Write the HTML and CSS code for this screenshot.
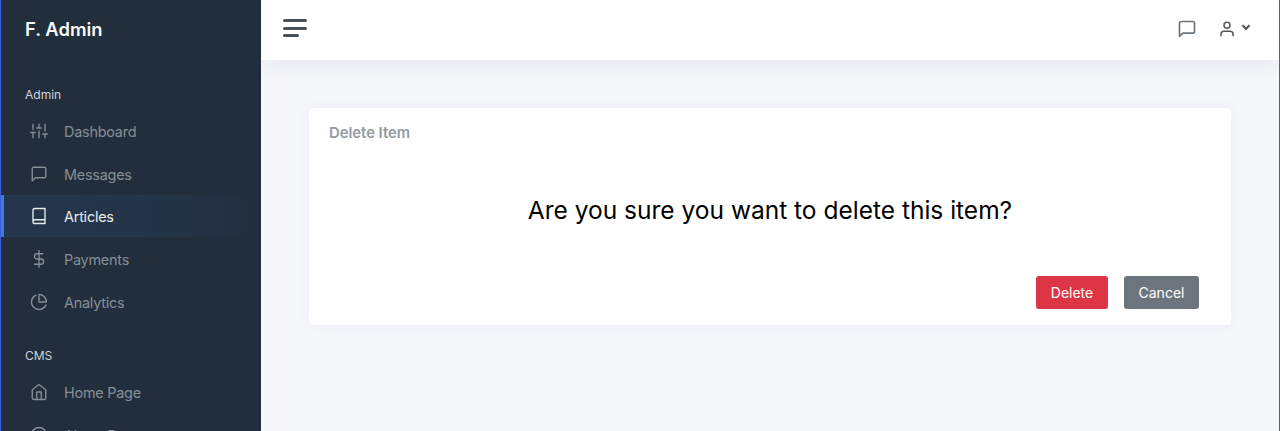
FILE: index.html
```html
<!DOCTYPE html>
<html lang="en">
<head>
<meta charset="utf-8">
<title>F. Admin</title>
<link rel="stylesheet" href="styles.css">
</head>
<body>
<div class="app">
  <nav class="sidebar">
    <div class="brand">F. Admin</div>
    <div class="section">Admin</div>
    <a class="link"><svg class="icon" viewBox="0 0 24 24"><path d="M4 21v-7M4 10V3M12 21v-9M12 8V3M20 21v-5M20 12V3M1 14h6M9 8h6M17 16h6"/></svg>Dashboard</a>
    <a class="link"><svg class="icon" viewBox="0 0 24 24"><path d="M21 15a2 2 0 0 1-2 2H7l-4 4V5a2 2 0 0 1 2-2h14a2 2 0 0 1 2 2z"/></svg>Messages</a>
    <a class="link active"><svg class="icon" viewBox="0 0 24 24"><path d="M4 19.5A2.5 2.5 0 0 1 6.500 17H20M6.500 2H20v20H6.500A2.500 2.500 0 0 1 4 19.500v-15A2.500 2.500 0 0 1 6.500 2z"/></svg>Articles</a>
    <a class="link"><svg class="icon" viewBox="0 0 24 24"><path d="M12 1v22M17 5H9.500a3.500 3.500 0 0 0 0 7h5a3.500 3.500 0 0 1 0 7H6"/></svg>Payments</a>
    <a class="link"><svg class="icon" viewBox="0 0 24 24"><path d="M21.210 15.890A10 10 0 1 1 8 2.830M22 12A10 10 0 0 0 12 2v10z"/></svg>Analytics</a>
    <div class="section">CMS</div>
    <a class="link"><svg class="icon" viewBox="0 0 24 24"><path d="M3 9l9-7 9 7v11a2 2 0 0 1-2 2H5a2 2 0 0 1-2-2zM9 22V12h6v10"/></svg>Home Page</a>
    <a class="link"><svg class="icon" viewBox="0 0 24 24"><circle cx="12" cy="12" r="10"/><path d="M12 16v-4M12 8h.01"/></svg>About Page</a>
  </nav>
  <div class="main">
    <header class="navbar">
      <div class="hamburger"><i></i><i></i><i class="short"></i></div>
      <div class="tools">
        <svg class="tool-message" viewBox="0 0 24 24"><path d="M21 15a2 2 0 0 1-2 2H7l-4 4V5a2 2 0 0 1 2-2h14a2 2 0 0 1 2 2z"/></svg>
        <svg class="tool-user" viewBox="0 0 24 24"><path d="M20 21v-2a4 4 0 0 0-4-4H8a4 4 0 0 0-4 4v2"/><circle cx="12" cy="7" r="4"/></svg>
        <span class="caret"></span>
      </div>
    </header>
    <main class="content">
      <section class="card">
        <h5 class="card-title">Delete Item</h5>
        <p class="question">Are you sure you want to delete this item?</p>
        <div class="actions">
          <button class="btn danger">Delete</button>
          <button class="btn secondary">Cancel</button>
        </div>
      </section>
    </main>
  </div>
</div>
</body>
</html>
```

FILE: styles.css
```css
* { box-sizing: border-box; }
body {
  margin: 0;
  height: 431px;
  overflow: hidden;
  font: 14px/21px Inter, "Open Sans", sans-serif;
}
.app {
  display: flex;
  height: 431px;
  border-left: 1px solid #3b5ddd;
  border-right: 1px solid #4a5bc0;
  overflow: hidden;
}
.sidebar {
  flex: 0 0 260px;
  background: #222e3c;
}
.brand {
  padding: 16px 24px;
  height: 61.450px;
  color: #f8f9fa;
  font-size: 18.4px;
  font-weight: 600;
  line-height: 27px;
}
.section {
  padding: 22.150px 24px 3px;
  height: 47.900px;
  color: #ced4da;
  font-size: 12px;
  line-height: 22px;
}
.link {
  display: flex;
  align-items: center;
  gap: 16px;
  height: 42.700px;
  padding: 1.600px 0 0 26px;
  border-left: 3px solid transparent;
  color: #868e96;
  font-size: 14.4px;
  letter-spacing: -.22px;
}
.active {
  border-left-color: #3b7ddd;
  background: linear-gradient(90deg, rgba(59,125,221,.1), rgba(59,125,221,.0875) 50%, transparent);
  color: #e9ecef;
}
.icon { width: 18px; height: 18px; margin-top: -1px; }
svg {
  fill: none;
  stroke: currentColor;
  stroke-width: 1.800;
  stroke-linecap: round;
  stroke-linejoin: round;
}
.main {
  flex: 1;
  background: #f5f7fb;
}
.navbar {
  display: flex;
  align-items: center;
  justify-content: space-between;
  height: 60px;
  padding: 0 28px 0 22px;
  background: #fff;
  box-shadow: 0 0 32px 0 rgba(33,37,41,.1);
}
.hamburger {
  display: flex;
  flex-direction: column;
  gap: 4.500px;
  margin-top: -4px;
}
.hamburger i {
  width: 24px;
  height: 3px;
  border-radius: 2px;
  background: #495057;
}
.hamburger .short { width: 16px; }
.tools {
  display: flex;
  align-items: center;
  margin-top: -2px;
  color: #6c757d;
}
.tool-message { width: 20px; height: 20px; stroke-width: 2; }
.tool-user { width: 18px; height: 18px; margin-left: 21px; color: #555; stroke-width: 2; }
.caret {
  width: 6px;
  height: 6px;
  margin: -6px 2px 0 7px;
  border: solid #555;
  border-width: 0 2px 2px 0;
  transform: rotate(45deg);
}
.content { padding: 48px; }
.card {
  height: 217px;
  padding: 16px 20px;
  border-radius: 4px;
  background: #fff;
  box-shadow: 0 0 14px 0 rgba(53,64,82,.05);
}
.card-title {
  margin: 0;
  color: #939ba2;
  font-size: 14.8px;
  font-weight: 600;
  line-height: 18px;
}
.question {
  margin: 49px 0 0;
  color: #000;
  font-size: 24.500px;
  line-height: 38px;
  text-align: center;
}
.actions {
  display: flex;
  justify-content: flex-end;
  gap: 16px;
  margin: 47px 12px 0 0;
}
.btn {
  height: 33px;
  padding: 0;
  border: 0;
  border-radius: 3px;
  color: #fff;
  font: 14px/21px Inter, sans-serif;
}
.danger { width: 72px; background: #dc3545; }
.secondary { width: 75px; background: #6c757d; }
```
